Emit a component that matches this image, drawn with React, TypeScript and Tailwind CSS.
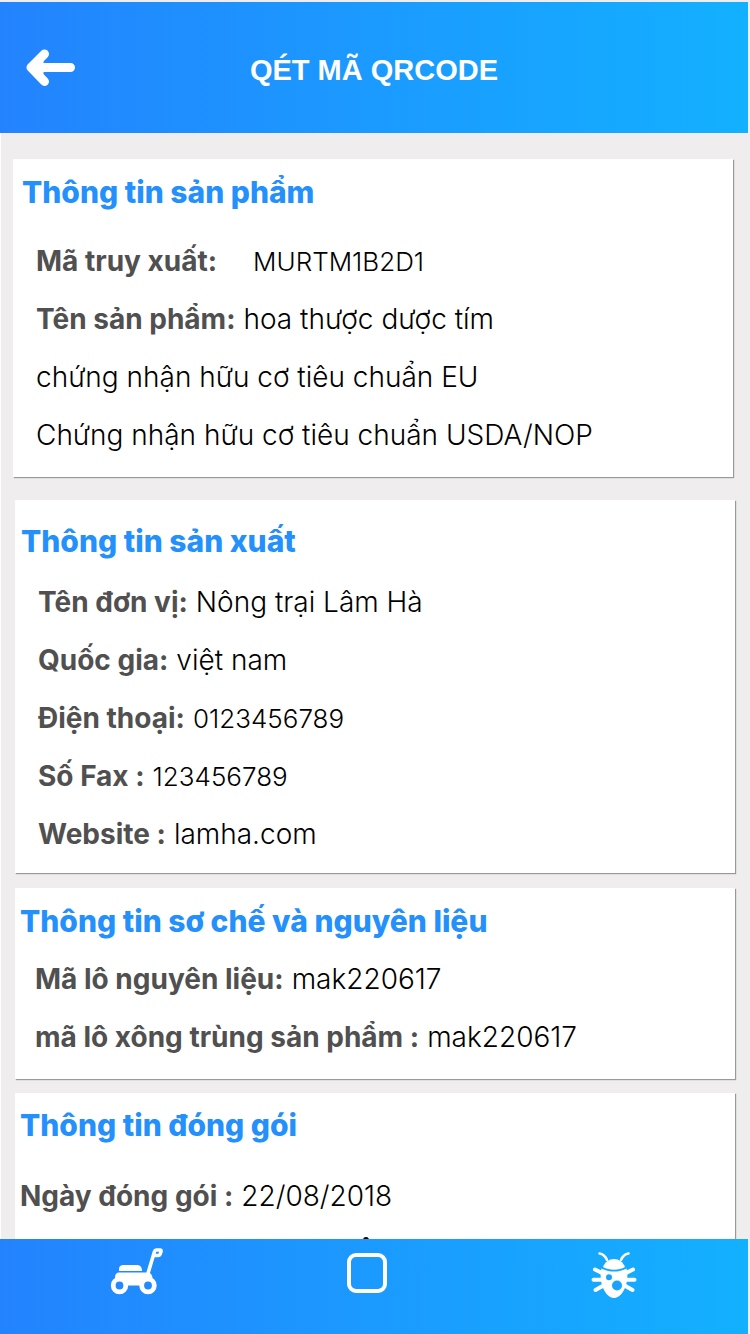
import React from 'react';

type InfoRowProps = {
  label?: string;
  value: string;
  wide?: boolean;
  numeric?: boolean;
};

const InfoRow: React.FC<InfoRowProps> = ({ label, value, wide, numeric }) => (
  <p className="h-[58px] text-[28px] leading-14 whitespace-nowrap">
    {label && <span className={`font-bold text-[#505050] ${wide ? 'mr-9' : 'mr-2'}`}>{label}</span>}
    <span className={`font-light text-black ${numeric ? 'text-[26px]' : ''}`}>{value}</span>
  </p>
);

type CardProps = {
  title: string;
  className: string;
  titleClass: string;
  rowsClass: string;
  children: React.ReactNode;
};

const Card: React.FC<CardProps> = ({ title, className, titleClass, rowsClass, children }) => (
  <section className={`bg-white shadow-[1px_1px_1px_#999] ${className}`}>
    <h2 className={`text-[30px] leading-10 font-extrabold whitespace-nowrap text-[#2490fb] ${titleClass}`}>{title}</h2>
    <div className={rowsClass}>{children}</div>
  </section>
);

const BackIcon = () => (
  <svg width="50" height="38" viewBox="0 0 50 38" fill="none" stroke="#fff" strokeWidth="9" strokeLinecap="round" strokeLinejoin="round">
    <path d="M18.5 5 5 18.5 18.5 32.5M7 18.5H44.5" />
    <path d="M8 18.5 16 11V26z" fill="#fff" strokeWidth="3" />
  </svg>
);

const MowerIcon = () => (
  <svg width="54" height="48" viewBox="0 0 54 48" fill="#fff">
    <path d="M9 24v-2c0-3 2-4 4-4h14c3 0 5 2 5 6z" />
    <path d="M5 34v-4c0-3 2-4.5 4-4.5h28c4 0 5.500 3 5.500 6v5l-8 2H16z" />
    <path d="M37.5 28 44.500 4.500c.3-1 .8-1.500 1.800-1.500h3.700c1 0 1.300.6 1 1.500l-.9 2.800c-.3.900-.8 1.200-1.700 1.200H44" fill="none" stroke="#fff" strokeWidth="3.600" strokeLinejoin="round" />
    <circle cx="9.500" cy="38.500" r="6.300" fill="#2389fc" stroke="#fff" strokeWidth="4.800" />
    <circle cx="38" cy="38.500" r="6.300" fill="#2389fc" stroke="#fff" strokeWidth="4.800" />
  </svg>
);

const SquareIcon = () => (
  <svg width="40" height="40" viewBox="0 0 40 40" fill="none">
    <rect x="2" y="2" width="36" height="36" rx="7" stroke="#fff" strokeWidth="4" />
  </svg>
);

const BugIcon = () => (
  <svg width="46" height="48" viewBox="0 0 46 48" fill="#fff">
    <g fill="none" stroke="#fff" strokeLinecap="round">
      <path d="M8.5 2.500c4 .5 6 3 7.500 6.500M37.500 2.500c-4 .5-6 3-7.500 6.500" strokeWidth="2.500" />
      <path d="m4 18.500 8 4M2.500 28.700H11M4.500 39l8-4.500M42 18.500l-8 4M43.500 28.700H35M41.500 39l-8-4.500" strokeWidth="4" />
    </g>
    <path d="M12 16c2-5 6-8 11-8s9 3 11 8c-6 3.500-16 3.500-22 0z" />
    <path d="M10.500 17.500c7 4 18 4 25 0 1.500 5 1 13-1 18-2 6-6.500 11.500-11.500 11.500S13.500 41.500 11.500 35.500c-2-5-2.500-13-1-18z" />
    <circle cx="18" cy="26.300" r="3" fill="#18a3fe" />
    <circle cx="26" cy="34.500" r="5" fill="#18a3fe" />
  </svg>
);

export default function App() {
  return (
    <div className="flex h-screen flex-col overflow-hidden bg-[#efedee] font-['Inter','Noto_Sans',sans-serif]">
      <header className="mt-0.5 mr-0.5 grid h-[131px] shrink-0 grid-cols-[100px_1fr_100px] items-center bg-linear-to-r from-[#2383fe] to-[#13b0ff]">
        <button type="button" aria-label="Quay lại" className="pl-[26px]">
          <BackIcon />
        </button>
        <h1 className="pt-1.5 text-center font-['Liberation_Sans',Arial,sans-serif] text-[29px] font-bold text-white">QÉT MÃ QRCODE</h1>
      </header>

      <main className="flex min-h-0 flex-1 flex-col overflow-hidden border-l border-white pt-[26px] pr-[15px] pl-3.5">
        <Card title="Thông tin sản phẩm" className="-ml-0.5 mr-0.5 pt-[13px] pb-3" titleClass="pl-[9px]" rowsClass="pt-[21px] pl-[23px]">
          <InfoRow label="Mã truy xuất:" value="MURTM1B2D1" wide numeric />
          <InfoRow label="Tên sản phẩm:" value="hoa thược dược tím" />
          <InfoRow value="chứng nhận hữu cơ tiêu chuẩn EU" />
          <InfoRow value="Chứng nhận hữu cơ tiêu chuẩn USDA/NOP" />
        </Card>

        <Card title="Thông tin sản xuất" className="mt-[23px] pt-[21px] pb-[9px]" titleClass="pl-1.5" rowsClass="pt-[13px] pl-[23px]">
          <InfoRow label="Tên đơn vị:" value="Nông trại Lâm Hà" />
          <InfoRow label="Quốc gia:" value="việt nam" />
          <InfoRow label="Điện thoại:" value="0123456789" numeric />
          <InfoRow label="Số Fax :" value="123456789" numeric />
          <InfoRow label="Website :" value="lamha.com" />
        </Card>

        <Card title="Thông tin sơ chế và nguyên liệu" className="mt-[15px] pt-[13px] pb-3" titleClass="pl-[5px]" rowsClass="pt-2.5 pl-5">
          <InfoRow label="Mã lô nguyên liệu:" value="mak220617" />
          <InfoRow label="mã lô xông trùng sản phẩm :" value="mak220617" />
        </Card>

        <Card title="Thông tin đóng gói" className="mt-3.5 flex-1 pt-3" titleClass="pl-[5px]" rowsClass="pt-[23px] pl-[5px]">
          <InfoRow label="Ngày đóng gói :" value="22/08/2018" />
          <div className="mt-[11px] ml-[343px] size-1.5 rounded-full bg-black" />
        </Card>
      </main>

      <nav className="mr-0.5 grid h-[95px] shrink-0 grid-cols-3 bg-linear-to-r from-[#2383fe] to-[#13b0ff] px-3">
        <button type="button" aria-label="Máy cắt cỏ" className="flex justify-center pt-2 pl-2">
          <MowerIcon />
        </button>
        <button type="button" aria-label="Trang chính" className="flex justify-center pt-3.5 pr-3.5">
          <SquareIcon />
        </button>
        <button type="button" aria-label="Sâu bệnh" className="flex justify-center pt-3 pr-0.5">
          <BugIcon />
        </button>
      </nav>
    </div>
  );
}
